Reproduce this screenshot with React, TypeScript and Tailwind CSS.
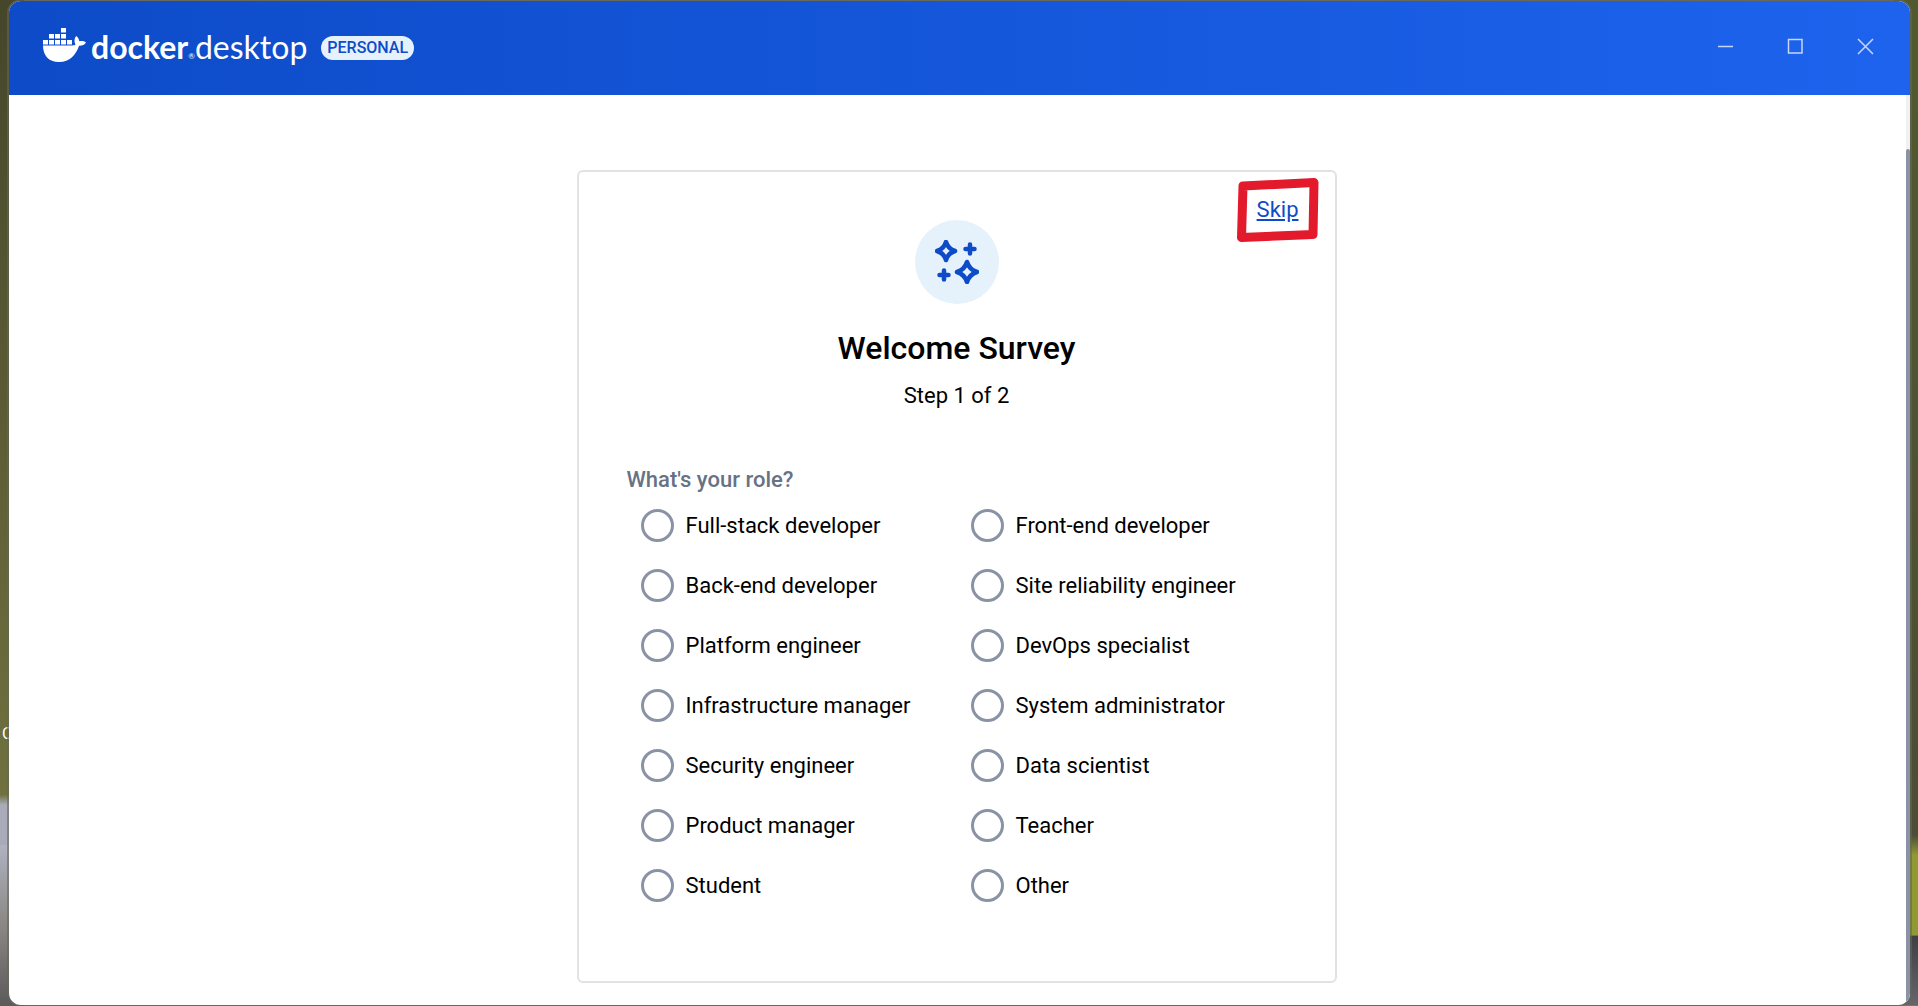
const roles = [
  'Full-stack developer',
  'Front-end developer',
  'Back-end developer',
  'Site reliability engineer',
  'Platform engineer',
  'DevOps specialist',
  'Infrastructure manager',
  'System administrator',
  'Security engineer',
  'Data scientist',
  'Product manager',
  'Teacher',
  'Student',
  'Other',
];

function WhaleLogo() {
  return (
    <svg className="mb-1" width="44" height="36" viewBox="0 0 44 36" fill="#fff" aria-hidden="true">
      <path d="M18 0h5v4.500h-5zM6 6h5v4.500H6zM12 6h5v4.500h-5zM18 6h5v4.500h-5zM0 12h5v4.500H0zM6 12h5v4.500H6zM12 12h5v4.500h-5zM18 12h5v4.500h-5zM24 12h5v4.500h-5z" />
      <path d="M0 17.500h29.500c1.500 0 2.500-.4 3-.9-1.600-2.600-1.300-6 .6-8.600 1.900 1.300 3 3.200 3.200 5.300 2-.5 4.800-.3 6.700.9-1.300 2.700-4 3.600-6.900 3.500C33 26.500 27 34 16 34 5.500 34 0 27.500 0 17.500z" />
    </svg>
  );
}

function SparkleIcon() {
  return (
    <svg width="44" height="44" viewBox="0 0 44 44" fill="none" stroke="#0d4bc8" strokeWidth="4.500" strokeLinecap="round" strokeLinejoin="round" aria-hidden="true">
      <path d="M11 2c1.500 5 4 7.500 9 9-5 1.500-7.500 4-9 9-1.500-5-4-7.500-9-9 5-1.500 7.500-4 9-9z" />
      <path d="M32 22c1.700 5.500 4.500 8.300 10 10-5.500 1.700-8.300 4.500-10 10-1.700-5.500-4.500-8.300-10-10 5.500-1.700 8.300-4.500 10-10z" />
      <path d="M35 4.500v9M30.500 9h9M9 30.500v9M4.500 35h9" />
    </svg>
  );
}

function Header() {
  return (
    <header className="flex h-[94px] shrink-0 items-center bg-linear-to-r from-[#0d4bc8] to-[#1d63ed] pl-[34px] pr-9">
      <WhaleLogo />
      <div className="mt-1.5 ml-1 flex items-baseline font-['Lato',sans-serif] text-[32px] leading-10 text-white">
        <span className="font-bold">docker</span>
        <span className="text-[8px]">®</span>
        <span>desktop</span>
      </div>
      <span className="ml-3.5 flex h-6 items-center rounded-full bg-[#e5f2fc] px-1.5 text-base font-medium text-[#0d4bc8]">PERSONAL</span>
      <div className="mb-1 ml-auto flex gap-[53px] text-white/75">
        <button aria-label="Minimize">
          <svg width="17" height="17" viewBox="0 0 17 17" fill="none" stroke="currentColor" strokeWidth="1.500"><path d="M1 8.500h15" /></svg>
        </button>
        <button aria-label="Maximize">
          <svg width="17" height="17" viewBox="0 0 17 17" fill="none" stroke="currentColor" strokeWidth="1.500"><path d="M1.500 1.500h13.500v13.500H1.500z" /></svg>
        </button>
        <button aria-label="Close">
          <svg width="17" height="17" viewBox="0 0 17 17" fill="none" stroke="currentColor" strokeWidth="1.500"><path d="M1 1l15 15M16 1L1 16" /></svg>
        </button>
      </div>
    </header>
  );
}

function SurveyCard() {
  return (
    <section className="relative flex w-[760px] flex-col items-center rounded-md border-2 border-[#e1e2e6] px-12 pt-12 pb-[65px]">
      <a href="#skip" className="absolute top-[22px] right-9 text-[22px] leading-8 text-[#0d4bc8] underline">Skip</a>
      <svg className="pointer-events-none absolute top-0.5 right-3" width="88" height="70" viewBox="0 0 88 70" fill="none" stroke="#e3192c" strokeWidth="9" strokeLinejoin="round" aria-hidden="true">
        <path d="M8 12l71-3.500-1 52L6.500 63.500z" />
      </svg>
      <div className="flex size-[84px] items-center justify-center rounded-full bg-[#e5f2fc]">
        <SparkleIcon />
      </div>
      <h1 className="mt-6 text-[32px] leading-10 font-medium">Welcome Survey</h1>
      <p className="mt-3 text-[22px] leading-8">Step 1 of 2</p>
      <fieldset className="mt-[52px] w-full">
        <legend className="text-[22px] leading-8 font-medium text-[#677285]">What's your role?</legend>
        <div className="grid grid-cols-2">
          {roles.map((role) => (
            <label key={role} className="flex h-[60px] items-center gap-3 pb-px pl-3.5 text-[22px]">
              <input type="radio" name="role" className="size-[33px] shrink-0 appearance-none rounded-full border-3 border-[#8993a5] checked:border-[10px]" />
              {role}
            </label>
          ))}
        </div>
      </fieldset>
    </section>
  );
}

function Wallpaper() {
  return (
    <div className="absolute inset-0 flex justify-between overflow-hidden bg-[#6b6b62]" aria-hidden="true">
      <div className="w-6 bg-linear-to-b from-[#45462a] from-0% via-[#70713f] via-79% to-[#a9abb8] to-80%">
        <div className="mt-[100vh] h-[16vh] -translate-y-full bg-linear-to-b from-[#b0b2c0] via-[#8a8784] to-[#5c5a5a]" />
      </div>
      <div className="w-6 bg-linear-to-b from-[#515a2e] from-0% via-[#4c4d35] via-83% to-[#8f9a35] to-85%">
        <div className="mt-[100vh] h-[7vh] -translate-y-full bg-linear-to-b from-[#3f4045] to-[#66656a]" />
      </div>
      <span className="absolute top-[73vh] left-0.5 -translate-y-1/2 text-base text-white">C</span>
    </div>
  );
}

export default function App() {
  return (
    <div className="relative min-h-screen pt-px pr-2 pb-px pl-[9px] font-['Roboto',sans-serif] text-black">
      <Wallpaper />
      <div className="relative flex min-h-[calc(100vh-2px)] flex-col overflow-hidden rounded-xl bg-white ring-2 ring-[#66665a]/60">
        <Header />
        <div className="flex grow">
          <main className="flex grow justify-center pt-[75px] pr-0.5 pb-[22px]">
            <SurveyCard />
          </main>
          <div className="flex w-1 flex-col bg-[#f1f1f1] pt-[54px]">
            <div className="grow rounded-t-sm bg-[#8993a5]" />
          </div>
        </div>
      </div>
    </div>
  );
}
